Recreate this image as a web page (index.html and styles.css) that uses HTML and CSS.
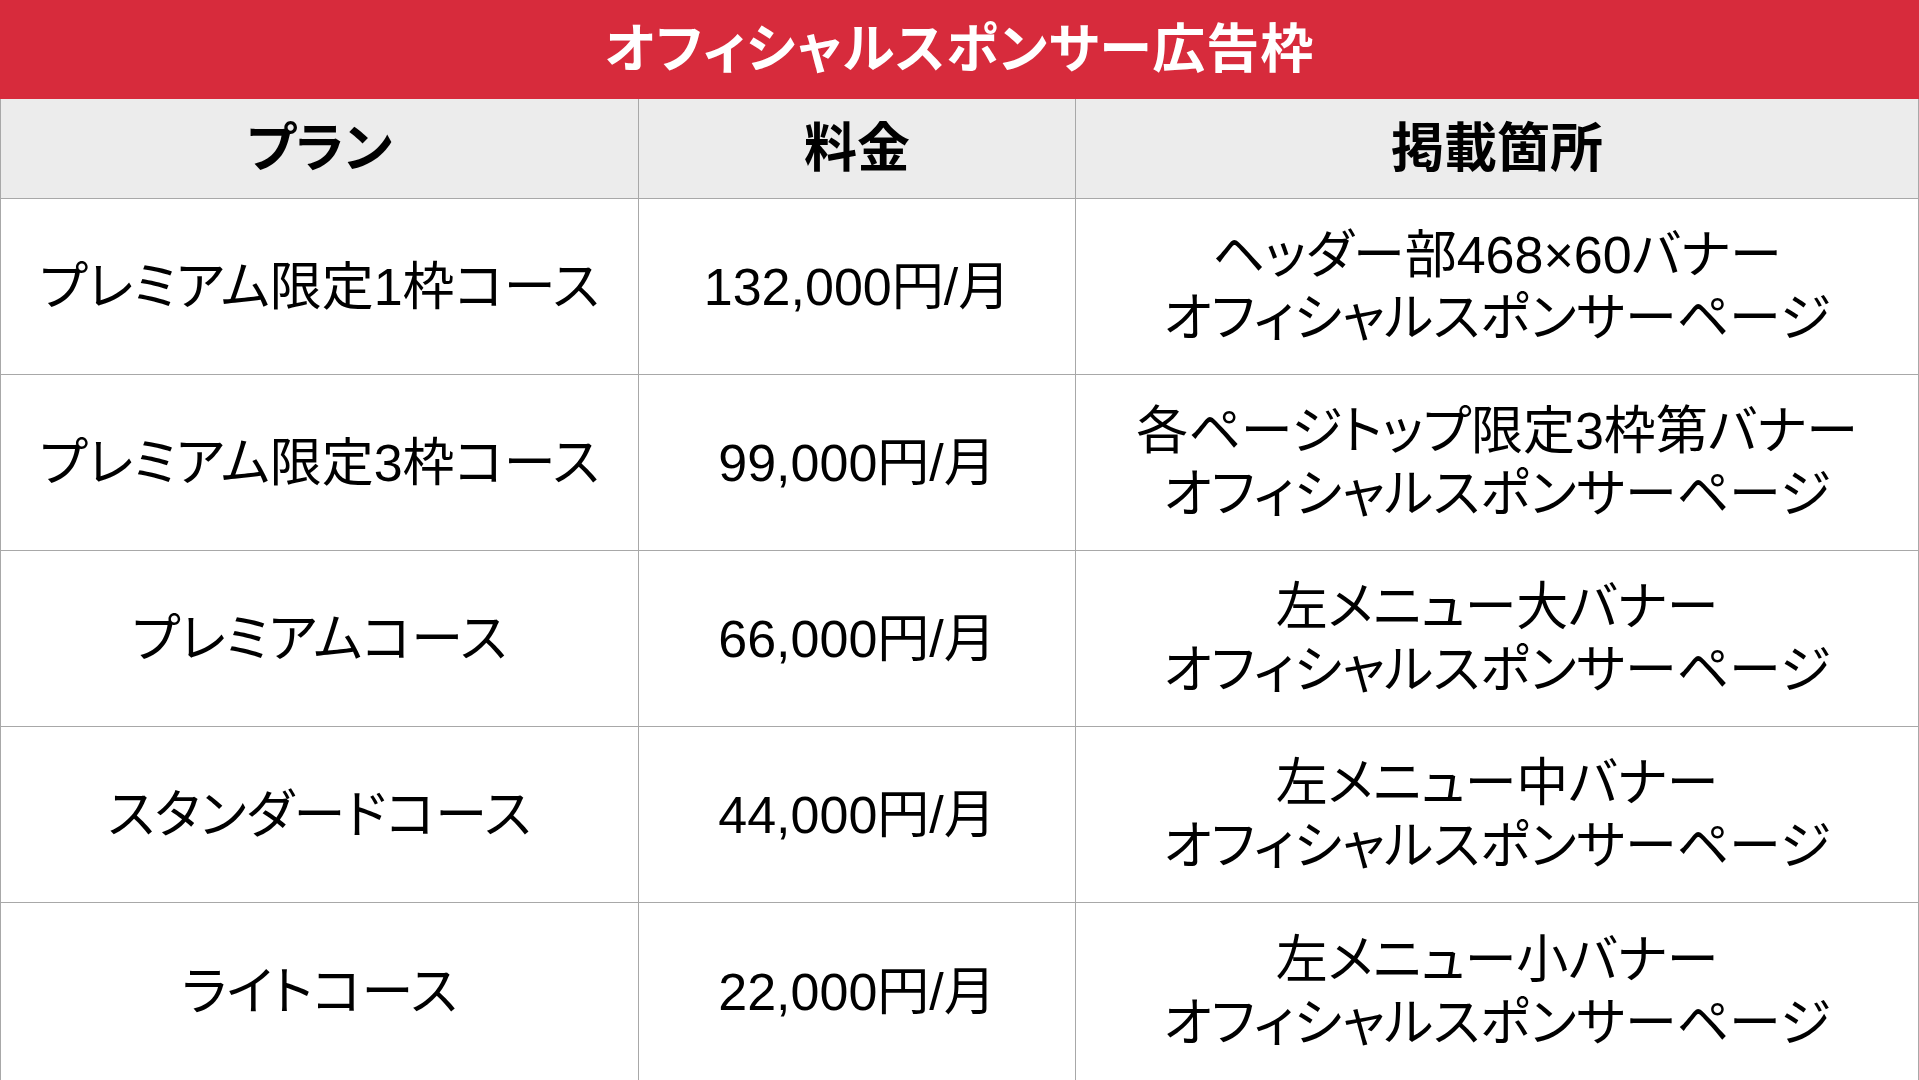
FILE: index.html
```html
<!DOCTYPE html>
<html lang="ja">
<head>
<meta charset="utf-8">
<title>オフィシャルスポンサー広告枠</title>
<link rel="stylesheet" href="styles.css">
</head>
<body>
<div class="page">
  <div class="title">オフィシャルスポンサー広告枠</div>
  <div class="table">
    <div class="cell head first">プラン</div>
    <div class="cell head">料金</div>
    <div class="cell head">掲載箇所</div>

    <div class="cell first">プレミアム限定1枠コース</div>
    <div class="cell">132,000円/月</div>
    <div class="cell place"><span>ヘッダー部468×60バナー</span><span>オフィシャルスポンサーページ</span></div>

    <div class="cell first">プレミアム限定3枠コース</div>
    <div class="cell">99,000円/月</div>
    <div class="cell place"><span>各ページトップ限定3枠第バナー</span><span>オフィシャルスポンサーページ</span></div>

    <div class="cell first">プレミアムコース</div>
    <div class="cell">66,000円/月</div>
    <div class="cell place"><span>左メニュー大バナー</span><span>オフィシャルスポンサーページ</span></div>

    <div class="cell first">スタンダードコース</div>
    <div class="cell">44,000円/月</div>
    <div class="cell place"><span>左メニュー中バナー</span><span>オフィシャルスポンサーページ</span></div>

    <div class="cell first last">ライトコース</div>
    <div class="cell last">22,000円/月</div>
    <div class="cell place last"><span>左メニュー小バナー</span><span>オフィシャルスポンサーページ</span></div>
  </div>
</div>
</body>
</html>
```

FILE: styles.css
```css
html, body {
  margin: 0;
  padding: 0;
  background: #ffffff;
}

.page {
  width: 1919px;
  height: 1080px;
  overflow: hidden;
  font-family: "Liberation Sans", "Noto Sans CJK JP", sans-serif;
  font-feature-settings: "palt";
  color: #000000;
}

.title {
  height: 99px;
  box-sizing: border-box;
  padding-bottom: 9px;
  background: #d72b3c;
  color: #ffffff;
  font-weight: 700;
  font-size: 53px;
  display: flex;
  align-items: center;
  justify-content: center;
  letter-spacing: 1px;
}

.table {
  display: grid;
  grid-template-columns: 639px 437px 1fr;
  grid-template-rows: 100px repeat(4, 176px) 177px;
}

.cell {
  border-right: 1px solid #a8a8a8;
  border-bottom: 1px solid #a8a8a8;
  display: flex;
  align-items: center;
  justify-content: center;
  font-size: 52px;
  line-height: 1;
  white-space: nowrap;
}

.cell.first {
  border-left: 1px solid #a8a8a8;
}

.cell.last {
  border-bottom: none;
}

.cell.head {
  background: #ececec;
  font-weight: 700;
  font-size: 53px;
}

.cell.place {
  flex-direction: column;
  gap: 8px;
  line-height: 1.05;
}
```
